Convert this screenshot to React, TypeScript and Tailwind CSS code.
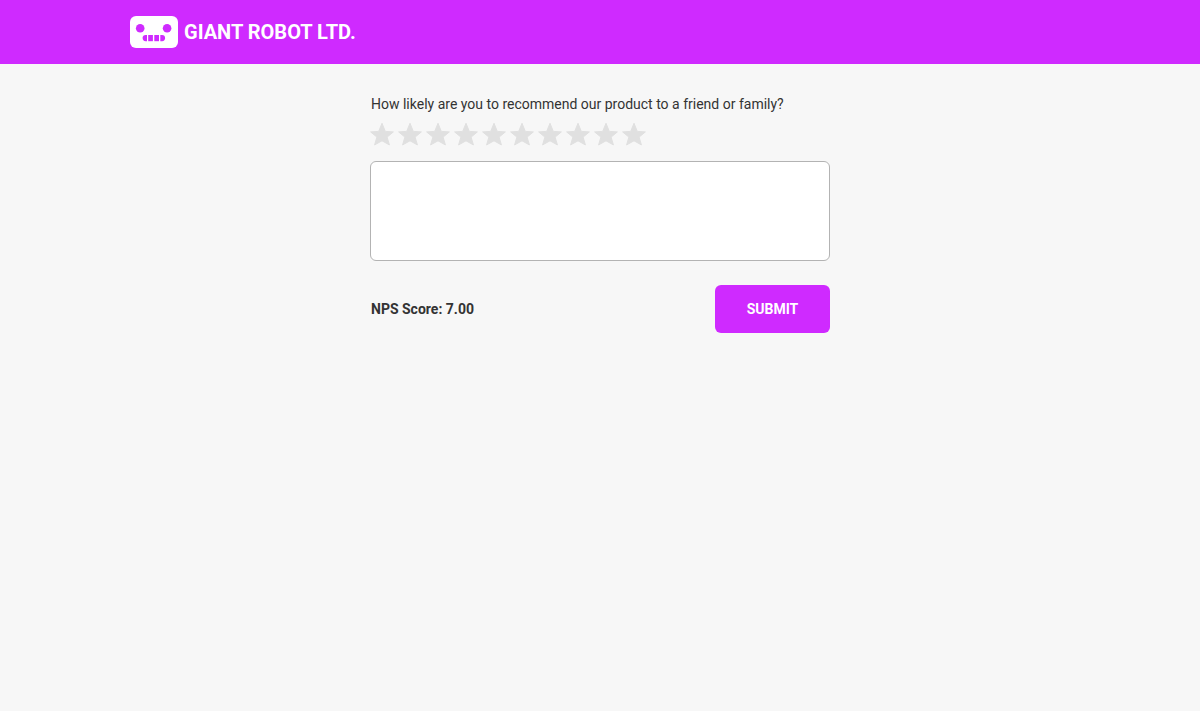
import { useState } from "react";

const SCORES = [1, 2, 3, 4, 5, 6, 7, 8, 9, 10];

function Logo() {
  return (
    <svg className="h-8 w-12 shrink-0" viewBox="0 0 48 32" aria-hidden="true">
      <rect width="48" height="32" rx="6" fill="#fff" />
      <g fill="#cf2aff">
        <circle cx="10.2" cy="12.2" r="4.3" />
        <circle cx="37.1" cy="12.2" r="4.3" />
        <path d="M17 19v6.2h-1.3a3.1 3.1 0 0 1 0-6.2z" />
        <rect x="18.2" y="19" width="4.7" height="6.2" />
        <rect x="24.3" y="19" width="4.7" height="6.2" />
        <path d="M30.3 19v6.2h1.7a3.1 3.1 0 0 0 0-6.2z" />
      </g>
    </svg>
  );
}

function Star({ filled }: { filled: boolean }) {
  return (
    <svg
      className={filled ? "size-6 text-[#cf2aff]" : "size-6 text-[#e0e0e0]"}
      viewBox="0 0 24 24"
      fill="currentColor"
      stroke="currentColor"
      strokeWidth="1"
      strokeLinejoin="round"
      aria-hidden="true"
    >
      <path d="M12 1.3l3.3 8.1 8.1.5-6.3 5.2 2.3 7.8-7.4-4.1-7.4 4.1 2.3-7.8L.6 9.9l8.1-.5z" />
    </svg>
  );
}

export default function App() {
  const [rating, setRating] = useState(0);

  return (
    <div className="min-h-screen bg-[#f7f7f7] font-['Roboto',sans-serif] text-sm text-[#333]">
      <header className="bg-[#cf2aff] px-4 text-white">
        <div className="mx-auto flex h-16 max-w-[940px] items-center gap-1.5">
          <Logo />
          <h1 className="text-xl font-bold">GIANT ROBOT LTD.</h1>
        </div>
      </header>

      <main className="px-4 py-8">
        <form
          className="mx-auto max-w-[460px]"
          onSubmit={(event) => event.preventDefault()}
        >
          <fieldset>
            <legend className="px-px leading-4">
              How likely are you to recommend our product to a friend or family?
            </legend>
            <div className="mt-2.5 flex gap-1">
              {SCORES.map((score) => (
                <label key={score} className="relative cursor-pointer">
                  <input
                    type="radio"
                    name="rating"
                    value={score}
                    aria-label={`${score} of 10`}
                    checked={rating === score}
                    onChange={() => setRating(score)}
                    className="sr-only"
                  />
                  <Star filled={score <= rating} />
                </label>
              ))}
            </div>
          </fieldset>

          <textarea
            aria-label="Comment"
            className="mt-[15px] block h-[100px] w-full resize-none rounded-md border border-[#b3b3b3] bg-white p-3"
          />

          <div className="mt-6 flex items-center justify-between">
            <p className="px-px font-bold">NPS Score: 7.00</p>
            <button
              type="submit"
              className="h-12 w-[115px] cursor-pointer rounded-md bg-[#cf2aff] font-bold text-white"
            >
              SUBMIT
            </button>
          </div>
        </form>
      </main>
    </div>
  );
}
